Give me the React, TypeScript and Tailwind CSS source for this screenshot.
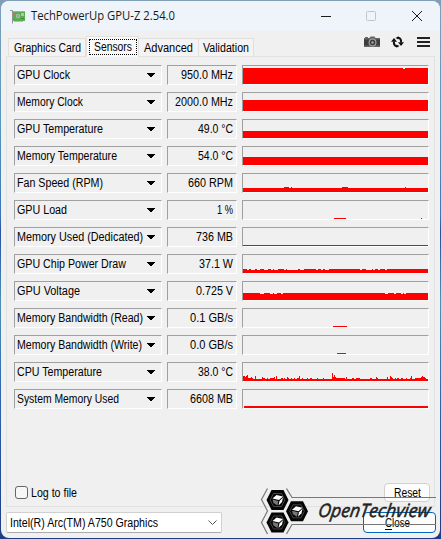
import type { ReactNode } from 'react'

// [start, end, height] in graph pixels, drawn up from the bottom edge
type Bar = [number, number, number]

// [start, end] stretches that sit one pixel below the rest
type Dip = [number, number]

type Sensor = {
  label: string
  value: string
  width: number
  bars: Bar[]
}

const W = 185

function dipped(height: number, dips: Dip[]): Bar[] {
  const bars: Bar[] = []
  let x = 0
  for (const [start, end] of dips) {
    bars.push([x, start, height], [start, end, height - 1])
    x = end
  }
  bars.push([x, W, height])
  return bars
}

const cpuTemperature: Bar[] = [
  [0, W, 2], [0, 2, 5], [2, 3, 4], [3, 4, 5], [4, 5, 6], [5, 8, 3], [8, 9, 4], [9, 10, 3],
  [12, 13, 5], [19, 20, 4], [20, 22, 3], [24, 25, 3], [27, 31, 3], [31, 32, 4], [33, 34, 5],
  [38, 40, 3], [41, 42, 3], [44, 45, 4], [45, 46, 3], [48, 49, 3], [51, 52, 3], [54, 56, 3],
  [56, 57, 5], [59, 60, 3], [64, 65, 3], [67, 69, 3], [74, 75, 3], [80, 81, 3], [89, 90, 8],
  [90, 91, 4], [91, 92, 6], [92, 93, 4], [93, 102, 3], [103, 104, 4], [109, 111, 3],
  [113, 117, 3], [127, 129, 3], [133, 134, 4], [134, 135, 3], [144, 145, 4], [147, 148, 5],
  [148, 149, 4], [149, 150, 3], [152, 153, 3], [154, 156, 3], [158, 160, 3], [163, 164, 3],
  [167, 168, 3], [168, 169, 5], [172, 178, 3], [178, 179, 4], [179, 180, 5], [180, 182, 4],
  [182, 183, 3],
]

const sensors: Sensor[] = [
  { label: 'GPU Clock', value: '950.0 MHz', width: 53, bars: dipped(16, [[160, 162]]) },
  { label: 'Memory Clock', value: '2000.0 MHz', width: 66, bars: [[0, W, 11]] },
  { label: 'GPU Temperature', value: '49.0 °C', width: 86, bars: [[0, W, 7]] },
  { label: 'Memory Temperature', value: '54.0 °C', width: 100, bars: [[0, W, 8]] },
  {
    label: 'Fan Speed (RPM)',
    value: '660 RPM',
    width: 86,
    bars: [[0, W, 4], [41, 46, 5], [48, 49, 5], [99, 105, 5], [162, 163, 5]],
  },
  { label: 'GPU Load', value: '1 %', width: 50, bars: [[91, 103, 1], [178, 179, 1]] },
  { label: 'Memory Used (Dedicated)', value: '736 MB', width: 126, bars: [[0, W, 1]] },
  {
    label: 'GPU Chip Power Draw',
    value: '37.1 W',
    width: 109,
    bars: dipped(4, [
      [4, 6], [8, 12], [14, 17], [21, 25], [28, 30], [31, 35], [41, 43], [44, 55], [57, 61],
      [73, 75], [78, 80], [82, 86], [117, 119], [123, 129], [130, 132], [135, 137], [142, 144],
    ]),
  },
  {
    label: 'GPU Voltage',
    value: '0.725 V',
    width: 63,
    bars: dipped(7, [[17, 21], [27, 30], [31, 34], [38, 40], [142, 145], [151, 153], [158, 160], [161, 163]]),
  },
  { label: 'Memory Bandwidth (Read)', value: '0.1 GB/s', width: 126, bars: [[90, 104, 1]] },
  { label: 'Memory Bandwidth (Write)', value: '0.0 GB/s', width: 125, bars: [[94, 103, 1]] },
  { label: 'CPU Temperature', value: '38.0 °C', width: 85, bars: cpuTemperature },
  { label: 'System Memory Used', value: '6608 MB', width: 102, bars: [[1, W, 2]] },
]

// Text stretched to the width it has in the native dialog font
function Label({ children, width, className = '' }: { children: string; width: number; className?: string }) {
  return (
    <svg width={width} height="16" className={`block shrink-0 overflow-visible ${className}`}>
      <text x="0" y="12" textLength={width} lengthAdjust="spacingAndGlyphs" fill="currentColor">
        {children}
      </text>
    </svg>
  )
}

const valueWidths: Record<string, number> = {
  '950.0 MHz': 52,
  '2000.0 MHz': 58,
  '49.0 °C': 35,
  '54.0 °C': 35,
  '660 RPM': 45,
  '1 %': 16,
  '736 MB': 37,
  '37.1 W': 34,
  '0.725 V': 37,
  '0.1 GB/s': 43,
  '0.0 GB/s': 43,
  '38.0 °C': 35,
  '6608 MB': 43,
}

function Sunken({ className, children }: { className: string; children: ReactNode }) {
  return (
    <div className={`h-5 border border-t-[#a0a0a0] border-l-[#a0a0a0] border-r-white border-b-white ${className}`}>
      {children}
    </div>
  )
}

function SensorRow({ label, value, width, bars }: Sensor) {
  return (
    <div className="flex">
      <Sunken className="flex w-[148px] items-center justify-between pr-[6px] pl-[2px]">
        <Label width={width}>{label}</Label>
        <svg width="8" height="4" shapeRendering="crispEdges">
          <path d="M0 0h8v1H7v1H6v1H5v1H3V3H2V2H1V1H0z" />
        </svg>
      </Sunken>
      <Sunken className="ml-[5px] flex w-[70px] items-center justify-end pr-[3px]">
        <Label width={valueWidths[value]}>{value}</Label>
      </Sunken>
      <Sunken className="ml-[5px] w-[187px]">
        <svg width={W} height="18" shapeRendering="crispEdges" className="block">
          {bars.map(([start, end, h], i) => (
            <rect key={i} x={start} y={18 - h} width={end - start} height={h} fill="#ff0000" />
          ))}
        </svg>
      </Sunken>
    </div>
  )
}

function TitleBar() {
  return (
    <div className="flex h-[30px] shrink-0 items-center bg-[#eef4f9] pr-[18px] pl-[9px]">
      <svg width="16" height="15" viewBox="0 0 16 15">
        <path d="M0 1.500h2.500V14.500" fill="none" stroke="#8b9592" />
        <rect x="3" y="2" width="12" height="10" fill="#5bab50" />
        <rect x="3" y="2" width="12" height="1" fill="#8bc983" />
        <rect x="4" y="12" width="9" height="1" fill="#b9c77a" />
        <circle cx="8" cy="7" r="2.200" fill="#a9bda8" />
        <circle cx="8" cy="7" r="1" fill="#8c9c80" />
        <rect x="11" y="4" width="3" height="3" fill="#a3cf9c" />
        <rect x="4" y="5" width="1" height="2" fill="#c4705c" />
        <rect x="11" y="9" width="3" height="1" fill="#3f8a3c" />
      </svg>
      <svg width="144" height="18" className="ml-[5px] overflow-visible font-['Open_Sans','Noto_Sans',sans-serif] text-[12px]">
        <text x="0" y="13" textLength="144" lengthAdjust="spacingAndGlyphs" fill="#1a1a1a">
          TechPowerUp GPU-Z 2.54.0
        </text>
      </svg>
      <svg width="101" height="10" className="ml-auto overflow-visible" fill="none" stroke="#1b1b1b">
        <path d="M0 5.500h10" shapeRendering="crispEdges" />
        <rect x="45.500" y="0.500" width="9" height="9" rx="1" stroke="#c0c5c9" />
        <path d="M91 0l10 10M101 0l-10 10" />
      </svg>
    </div>
  )
}

function Tab({ name, textWidth, className }: { name: string; textWidth: number; className: string }) {
  return (
    <div className={`flex h-[18px] items-center justify-center border-t border-r border-[#e0e0e0] bg-[#f3f3f3] ${className}`}>
      <Label width={textWidth}>{name}</Label>
    </div>
  )
}

function Toolbar() {
  return (
    <div className="mr-[10px] mb-[8px] ml-auto flex items-center self-end">
      <svg width="16" height="12" viewBox="0 0 16 12">
        <path d="M1 2V1h3v1h1.500L6.500 0.500h4L11.500 2H16v9H0V2z" fill="#666" />
        <path d="M0 3.500h16v6H0z" fill="#3d3d3d" />
        <circle cx="8.500" cy="6.500" r="4" fill="#999" />
        <circle cx="8.500" cy="6.500" r="2.700" fill="#3a3a3a" />
        <circle cx="8.500" cy="6.500" r="1.200" fill="#aaa" />
      </svg>
      <svg width="13" height="12" viewBox="0 0 13 12" className="ml-[11px]">
        <path d="M6 10.300C3.500 10.300 2.700 8 2.900 5.500M7 1.700C9.500 1.700 10.300 4 10.100 6.500" fill="none" stroke="#111" strokeWidth="2" />
        <path d="M0 5.700L3 2L6 5.700zM7 6.300h6L10 10z" fill="#111" />
        <path d="M4.500 2L7.500 0.200v3.300zM8.500 10L5.500 8.500v3.300z" fill="#111" />
      </svg>
      <svg width="13" height="10" shapeRendering="crispEdges" className="ml-[13px]">
        <path d="M0 0h13v2H0zM0 4h13v2H0zM0 8h13v2H0z" fill="#222" />
      </svg>
    </div>
  )
}

function Hexagon({ x, y }: { x: number; y: number }) {
  return (
    <g transform={`translate(${x} ${y})`}>
      <path d="M-11 0L-6 -10H6L11 0L6 10H-6z" fill="#050505" />
      <path d="M-7.300 0L-4 -6.500H4L7.300 0L4 6.500H-4z" fill="none" stroke="#555" strokeWidth="0.800" />
      <path d="M-5 -1.500L-1 -5L5.500 -3.500L1.500 0z" fill="#fff" />
      <path d="M-5 -0.500L0.800 1L0 5.500L-4 3z" fill="#777" />
      <path d="M2 1L5.500 -2.500L4.500 2L1 5.500z" fill="#fff" />
    </g>
  )
}

function Watermark() {
  return (
    <svg
      width="177"
      height="50"
      className="pointer-events-none absolute top-[486px] left-[260px] overflow-visible"
    >
      <g fill="none" stroke="#777" strokeWidth="1.200">
        <path d="M7.500 2.500L1.500 13.500L7.500 25L1.500 36.500L7.500 48" />
        <path d="M26.500 2.500L32 11.500H176M26.500 48L32 38.500H176" />
      </g>
      <Hexagon x={17.500} y={14} />
      <Hexagon x={37} y={25.300} />
      <Hexagon x={17.500} y={36.500} />
      <text
        x="57"
        y="31.500"
        textLength="112"
        lengthAdjust="spacingAndGlyphs"
        fill="#222"
        stroke="#222"
        strokeWidth="0.500"
        transform="translate(5 0) skewX(-8)"
        className="font-['Open_Sans',sans-serif] text-[18.500px] italic"
      >
        OpenTechview
      </text>
    </svg>
  )
}

export default function App() {
  return (
    <div className="relative h-[539px] w-[441px] overflow-hidden bg-[linear-gradient(180deg,#7f9fb5_0%,#5897bd_22%,#3c74b5_40%,#2a4fa0_43%,#4b91b8_56%,#2e62aa_75%,#1d3c83_100%)] pt-px pl-px font-['Liberation_Sans',Arial,sans-serif] text-[12px] text-black">
      <div className="flex h-[537px] w-[439px] flex-col overflow-hidden rounded-lg bg-[#f0f0f0]">
        <TitleBar />

        <div className="flex h-[25px] items-end pl-[7px]">
          <Tab name="Graphics Card" textWidth={67} className="w-[78px] border-l" />
          <div className="z-10 -mb-px flex h-[21px] w-[53px] justify-center border border-b-0 border-[#e0e0e0] bg-[#f9f9f9] pt-[2px]">
            <div className="flex h-4 w-12 justify-center border border-dotted border-black">
              <Label width={38} className="-mt-px">Sensors</Label>
            </div>
          </div>
          <Tab name="Advanced" textWidth={49} className="w-[60px]" />
          <Tab name="Validation" textWidth={46} className="w-[55px]" />
          <Toolbar />
        </div>

        <div className="ml-[5px] flex h-[451px] w-[429px] flex-col border border-[#e2e2e2] pt-2 pl-[7px]">
          <div className="flex flex-col gap-[7px]">
            {sensors.map((sensor) => (
              <SensorRow key={sensor.label} {...sensor} />
            ))}
          </div>
          <div className="mt-auto mb-[4px] flex items-center justify-between pr-[4px] pl-px">
            <div className="flex items-center">
              <span className="h-[13px] w-[13px] rounded-[3px] border border-[#666] bg-[#f7f7f7]" />
              <Label width={46} className="ml-[3px]">Log to file</Label>
            </div>
            <button className="flex h-[19px] w-[46px] items-center justify-center rounded-[4px] border border-[#d0d0d0] bg-[#fdfdfd]">
              <Label width={27}>Reset</Label>
            </button>
          </div>
        </div>

        <div className="mt-[5px] flex items-center justify-between pr-1 pl-[5px]">
          <div className="flex h-[21px] w-[216px] items-center justify-between rounded-[2px] border border-[#d0d0d0] border-b-[#aaa] bg-white pr-1 pl-[3px]">
            <Label width={148}>Intel(R) Arc(TM) A750 Graphics</Label>
            <svg width="9" height="5" fill="none" stroke="#555">
              <path d="M0.500 0.500l4 4l4 -4" />
            </svg>
          </div>
          <button className="flex h-[21px] w-[73px] items-center justify-center rounded-[4px] border border-[#0067c0] bg-[#fdfdfd]">
            <span className="relative -left-[2px] flex">
              <Label width={25}>Close</Label>
              <span className="absolute top-[14px] left-0 h-px w-[7px] bg-black" />
            </span>
          </button>
        </div>
      </div>
      <Watermark />
    </div>
  )
}
